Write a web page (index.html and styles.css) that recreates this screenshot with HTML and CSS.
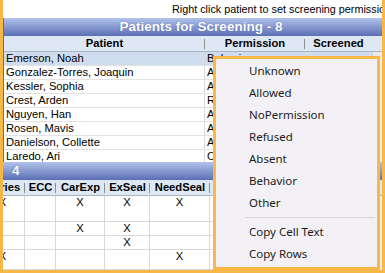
FILE: index.html
```html
<!DOCTYPE html>
<html lang="en">
<head>
    <meta charset="UTF-8">
    <title>Patients for Screening</title>
    <link rel="stylesheet" href="styles.css">
</head>
<body>
    <div class="frame">
        <div class="hint">Right click patient to set screening permission</div>

        <div class="grid grid-patients">
            <div class="grid-title">Patients for Screening - 8</div>
            <div class="grid-head">
                <div class="head-cols">
                    <div class="hcell sep">Patient</div>
                    <div class="hcell sep">Permission</div>
                    <div class="hcell">Screened</div>
                </div>
                <div class="scroll-corner"></div>
            </div>
            <div class="grid-body">
                <div class="body-cols">
                    <div class="row selected"><div class="cell">Emerson, Noah</div><div class="cell">Behavior</div><div class="cell"></div></div>
                    <div class="row"><div class="cell">Gonzalez-Torres, Joaquin</div><div class="cell">Allowed</div><div class="cell"></div></div>
                    <div class="row"><div class="cell">Kessler, Sophia</div><div class="cell">Allowed</div><div class="cell"></div></div>
                    <div class="row"><div class="cell">Crest, Arden</div><div class="cell">Refused</div><div class="cell"></div></div>
                    <div class="row"><div class="cell">Nguyen, Han</div><div class="cell">Allowed</div><div class="cell"></div></div>
                    <div class="row"><div class="cell">Rosen, Mavis</div><div class="cell">Allowed</div><div class="cell"></div></div>
                    <div class="row"><div class="cell">Danielson, Collette</div><div class="cell">Allowed</div><div class="cell"></div></div>
                    <div class="row"><div class="cell">Laredo, Ari</div><div class="cell">Other</div><div class="cell"></div></div>
                </div>
                <div class="vscroll"></div>
            </div>
        </div>

        <div class="grid grid-results">
            <div class="grid-title">4</div>
            <div class="grid-head">
                <div class="head-cols">
                    <div class="hcell sep">Caries</div>
                    <div class="hcell sep">ECC</div>
                    <div class="hcell sep">CarExp</div>
                    <div class="hcell sep">ExSeal</div>
                    <div class="hcell sep">NeedSeal</div>
                    <div class="hcell"></div>
                </div>
                <div class="scroll-corner"></div>
            </div>
            <div class="grid-body">
                <div class="body-cols">
                    <div class="row tall"><div class="cell">X</div><div class="cell"></div><div class="cell">X</div><div class="cell">X</div><div class="cell">X</div><div class="cell"></div></div>
                    <div class="row"><div class="cell"></div><div class="cell"></div><div class="cell">X</div><div class="cell">X</div><div class="cell"></div><div class="cell"></div></div>
                    <div class="row"><div class="cell"></div><div class="cell"></div><div class="cell"></div><div class="cell">X</div><div class="cell"></div><div class="cell"></div></div>
                    <div class="row last"><div class="cell">X</div><div class="cell"></div><div class="cell"></div><div class="cell"></div><div class="cell">X</div><div class="cell"></div></div>
                </div>
                <div class="vscroll"></div>
            </div>
        </div>

        <div class="menu">
            <div class="menu-item">Unknown</div>
            <div class="menu-item">Allowed</div>
            <div class="menu-item">NoPermission</div>
            <div class="menu-item">Refused</div>
            <div class="menu-item">Absent</div>
            <div class="menu-item">Behavior</div>
            <div class="menu-item">Other</div>
            <div class="menu-sep"></div>
            <div class="menu-item">Copy Cell Text</div>
            <div class="menu-item">Copy Rows</div>
        </div>
    </div>
</body>
</html>
```

FILE: styles.css
```css
body {
    margin: 0;
    font-family: "Liberation Sans", Arial, sans-serif;
    font-size: 11.2px;
    color: #000;
    background-color: #fff;
}

.frame {
    position: relative;
    width: 385px;
    height: 273px;
    box-sizing: border-box;
    border: 3px solid #f8b848;
    border-top: none;
    overflow: hidden;
    background-color: #fff;
}

.hint {
    height: 18px;
    line-height: 19px;
    padding-left: 169px;
    font-size: 10.8px;
    white-space: nowrap;
}

.grid {
    display: flex;
    flex-direction: column;
}

.grid-patients {
    height: 144px;
    border-left: 1px solid #6e6e6e;
}

.grid-results {
    height: 108px;
}

.grid-title {
    flex: none;
    height: 18px;
    line-height: 18px;
    background: linear-gradient(#b3c2eb, #5a6fb5);
    color: #fff;
    font-weight: bold;
    font-size: 13.5px;
    white-space: nowrap;
    text-shadow: 0 0 1px #3d5196;
}

.grid-patients .grid-title {
    text-align: center;
    padding-left: 16px;
}

.grid-results .grid-title {
    padding-left: 9px;
}

.grid-head {
    flex: none;
    display: flex;
    height: 16px;
    box-sizing: border-box;
    background-color: #dde8f4;
    border-bottom: 1px solid #a9b5c4;
    font-weight: bold;
    line-height: 15px;
}

.grid-body {
    flex: 1;
    display: flex;
    min-height: 0;
}

.head-cols,
.body-cols {
    flex: 1;
    overflow: hidden;
    white-space: nowrap;
}

.head-cols {
    display: grid;
}

.scroll-corner,
.vscroll {
    flex: none;
    width: 10px;
}

.vscroll {
    background-color: #ebebeb;
    border-left: 1px solid #d2d2d2;
    box-sizing: border-box;
}

.hcell {
    text-align: center;
    overflow: hidden;
}

.hcell.sep {
    background: linear-gradient(#8e8e8e, #8e8e8e) right center / 1px 10px no-repeat;
}

.row {
    display: grid;
    height: 14px;
    box-sizing: border-box;
    border-bottom: 1px solid #e2e2e2;
    line-height: 13px;
}

.row.selected {
    background-color: #cfddee;
}

.cell {
    border-right: 1px solid #dadada;
    padding-left: 2px;
    overflow: hidden;
}

/* column layouts */
.grid-patients .head-cols,
.grid-patients .row {
    grid-template-columns: 201px 100px 67px;
}

.grid-results .head-cols,
.grid-results .row {
    grid-template-columns: 44px 31px 49px 45px 60px 120px;
    margin-left: -22px;
}

.grid-results .row {
    border-bottom-color: #d8d8d8;
}

.grid-results .cell {
    padding-left: 0;
    text-align: center;
    border-right-color: #d8d8d8;
}

.row.tall {
    height: 26px;
}

.row.last {
    height: 20px;
}

.menu {
    position: absolute;
    left: 210px;
    top: 56px;
    width: 167px;
    height: 214px;
    box-sizing: border-box;
    border: 3px solid #f8b848;
    background-color: #f3f1f5;
    padding-top: 1px;
    font-family: "Noto Sans", sans-serif;
    font-size: 11.5px;
    color: #1b1b1b;
}

.menu-item {
    height: 22px;
    line-height: 22px;
    padding-left: 33px;
    white-space: nowrap;
}

.menu-sep {
    height: 1px;
    background-color: #d5d5d5;
    margin: 3px 2px 3px 29px;
}
```
